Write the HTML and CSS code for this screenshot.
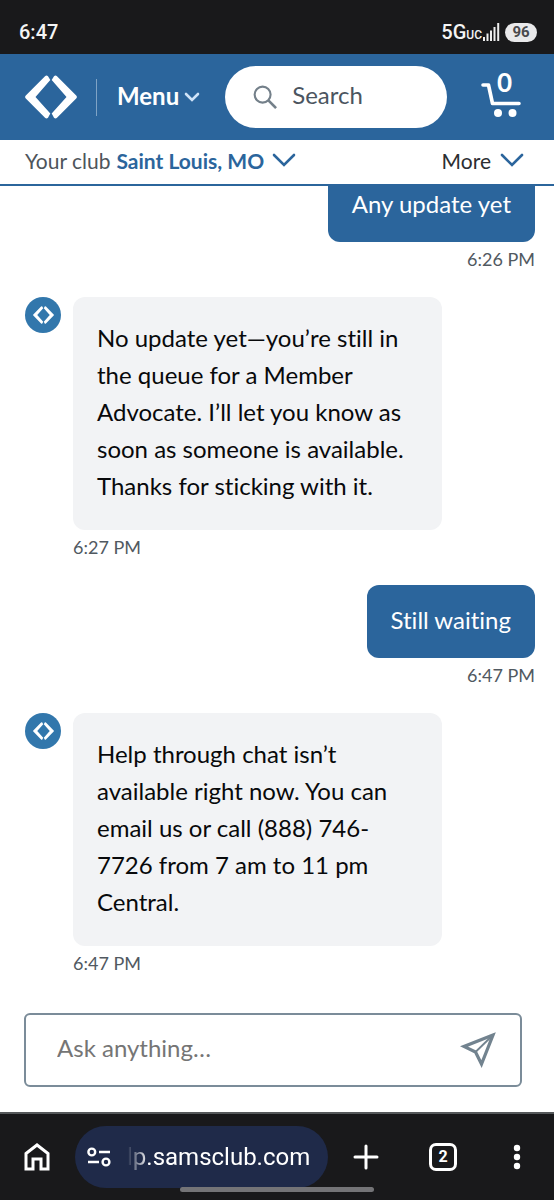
FILE: index.html
```html
<!DOCTYPE html>
<html lang="en">
<head>
<meta charset="utf-8">
<meta name="viewport" content="width=device-width, initial-scale=1">
<title>Chat</title>
<link rel="stylesheet" href="styles.css">
</head>
<body>
<svg width="0" height="0" class="defs" aria-hidden="true">
  <symbol id="mark" viewBox="0 0 52 44">
    <path fill="currentColor" d="M20 1.2Q21.500 0 23 1.200L25.300 5L10.500 22L25.300 38.500L23 42.800Q21.500 44 20 42.800L.8 23.500Q-.6 22 .8 20.500Z"/>
    <path fill="currentColor" d="M32 1.200Q30.500 0 29 1.200L26.700 5L41.500 22L26.700 38.500L29 42.800Q30.500 44 32 42.800L51.200 23.500Q52.600 22 51.200 20.500Z"/>
  </symbol>
  <symbol id="chevron" viewBox="0 0 24 14">
    <path fill="none" stroke="currentColor" stroke-width="2.600" stroke-linecap="round" d="M2 2L12 12L22 2"/>
  </symbol>
</svg>
<div class="screen">
  <div class="status">
    <span class="clock">6:47</span>
    <span class="network">5G<small>UC</small></span>
    <svg class="signal" viewBox="0 0 17 18" aria-hidden="true"><path fill="#eee" d="M0 14h2v4H0zM3.500 10.500h2V18h-2zM7 7.500h2V18H7zM10.500 4h2v14h-2zM14.200 0h2v18h-2z"/></svg>
    <span class="battery">96</span>
  </div>
  <header class="header">
    <a class="logo" href="#" aria-label="Home"><svg viewBox="0 0 52 44"><use href="#mark"/></svg></a>
    <button class="menu" type="button"><span>Menu</span><svg viewBox="0 0 16 10" aria-hidden="true"><path fill="none" stroke="#cfe3f8" stroke-width="2.600" stroke-linecap="round" d="M2 2L8 8L14 2"/></svg></button>
    <label class="search">
      <svg viewBox="0 0 26 26" aria-hidden="true"><circle cx="10" cy="10" r="8.300" fill="none" stroke="#74808a" stroke-width="2.200"/><path d="M16 16L24 24" stroke="#74808a" stroke-width="2.800"/></svg>
      <input type="search" placeholder="Search" aria-label="Search">
    </label>
    <button class="cart" type="button" aria-label="Cart, 0 items">
      <svg viewBox="0 0 40 44" aria-hidden="true"><path fill="none" stroke="#fff" stroke-width="3.600" stroke-linecap="round" stroke-linejoin="round" d="M2 10H7.500L11.500 28.500H38"/><circle cx="17" cy="38" r="4" fill="#fff"/><circle cx="31.500" cy="38" r="4" fill="#fff"/></svg>
      <span class="count">0</span>
    </button>
  </header>
  <nav class="clubbar">
    <button type="button" class="club"><span>Your club</span><b>Saint Louis, MO</b><svg viewBox="0 0 24 14" aria-hidden="true"><use href="#chevron"/></svg></button>
    <button type="button" class="more">More<svg viewBox="0 0 24 14" aria-hidden="true"><use href="#chevron"/></svg></button>
  </nav>
  <main class="chat">
    <article class="message mine"><p class="bubble">Any update yet</p><time>6:26 PM</time></article>
    <article class="message">
      <span class="avatar"><svg viewBox="0 0 52 44" aria-hidden="true"><use href="#mark"/></svg></span>
      <div class="content"><p class="bubble">No update yet—you’re still in the queue for a Member Advocate. I’ll let you know as soon as someone is available. Thanks for sticking with it.</p><time>6:27 PM</time></div>
    </article>
    <article class="message mine"><p class="bubble">Still waiting</p><time>6:47 PM</time></article>
    <article class="message">
      <span class="avatar"><svg viewBox="0 0 52 44" aria-hidden="true"><use href="#mark"/></svg></span>
      <div class="content"><p class="bubble">Help through chat isn’t available right now. You can email us or call (888) 746-7726 from 7 am to 11 pm Central.</p><time>6:47 PM</time></div>
    </article>
  </main>
  <form class="composer">
    <input type="text" placeholder="Ask anything…" aria-label="Ask anything">
    <button type="button" aria-label="Send"><svg viewBox="0 0 36 36" aria-hidden="true"><path fill="none" stroke="#72838f" stroke-width="3.200" d="M33 3L4 14.500L15.500 20L21.500 32Z"/><path d="M15 20.500L33 3" stroke="#72838f" stroke-width="1.800"/></svg></button>
  </form>
  <footer class="browser">
    <button type="button" aria-label="Home page"><svg class="home" viewBox="0 0 26 28" aria-hidden="true"><path fill="none" stroke="#fff" stroke-width="3" d="M2 10.500L13 2L24 10.500V26H17V16H9V26H2Z"/></svg></button>
    <button type="button" class="address">
      <svg viewBox="0 0 24 20" aria-hidden="true"><g fill="none" stroke="#fff" stroke-width="2.400"><circle cx="4.800" cy="5" r="3.400"/><path d="M12 5H23M1 15H12"/><circle cx="19" cy="15" r="3.400"/></g></svg>
      <span>lp.samsclub.com</span>
    </button>
    <button type="button" aria-label="New tab"><svg class="plus" viewBox="0 0 26 26" aria-hidden="true"><path stroke="#fff" stroke-width="3" stroke-linecap="round" d="M13 2V24M2 13H24"/></svg></button>
    <div class="tools">
      <button type="button" aria-label="2 open tabs"><span class="tabs">2</span></button>
      <button type="button" aria-label="More options"><svg class="dots" viewBox="0 0 8 26" aria-hidden="true"><g fill="#fff"><circle cx="4" cy="4" r="3.200"/><circle cx="4" cy="13" r="3.200"/><circle cx="4" cy="22" r="3.200"/></g></svg></button>
    </div>
    <span class="handle"></span>
  </footer>
</div>
</body>
</html>
```
FILE: styles.css
```css
* { box-sizing: border-box; }
body { margin: 0; font-family: Lato, "Open Sans", sans-serif; font-size: 24px; font-variant-ligatures: none; color: #08090b; background: #fff; }
button, input { font: inherit; color: inherit; border: 0; background: none; padding: 0; margin: 0; }
button { display: flex; align-items: center; }
svg { display: block; flex: none; }
p { margin: 0; }
.defs { position: absolute; }
.screen { display: flex; flex-direction: column; height: 100vh; overflow: hidden; }

.status { flex: none; display: flex; align-items: center; height: 54px; padding: 10px 17px 0 19px; background: #19191b; color: #f4f4f4; font-family: Roboto, sans-serif; font-size: 20px; font-weight: 500; }
.clock { flex: 1; }
.network small { font-size: 12px; }
.signal { width: 17px; height: 18px; margin: 0 5px 0 1px; }
.battery { width: 32px; border-radius: 10px; background: #e9e9eb; color: #4a4a4d; font-size: 15px; font-weight: 700; line-height: 19px; text-align: center; }

.header { flex: none; display: flex; align-items: center; height: 86px; padding: 0 33px 0 25px; background: #2b659c; color: #fff; }
.logo { color: #fff; }
.logo svg { width: 52px; height: 44px; }
.menu { gap: 5px; height: 37px; margin-left: 19px; padding-left: 20px; border-left: 1px solid #7fa3c5; font-weight: 700; }
.menu span { padding-bottom: 3px; }
.menu svg { width: 16px; height: 10px; }
.search { flex: 1; min-width: 0; display: flex; align-items: center; gap: 14px; height: 62px; margin: 0 34px 0 25px; padding: 0 24px 0 28px; border-radius: 31px; background: #fff; }
.search svg { width: 25px; height: 25px; }
.search input { width: 100%; min-width: 0; padding-bottom: 5px; outline: 0; appearance: none; color: #4b5560; }
.search input::placeholder { color: #4b5560; opacity: 1; }
.cart { position: relative; width: 40px; height: 44px; }
.cart svg { width: 40px; height: 44px; }
.count { position: absolute; left: 16px; top: -7px; font-size: 26px; line-height: 28px; font-weight: 700; }

.clubbar { flex: none; display: flex; justify-content: space-between; height: 46px; padding: 0 30px 4px 25px; border-bottom: 2px solid #2b659c; font-size: 21px; }
.club { gap: 6px; color: #4e555b; }
.club b { color: #2b659c; }
.more { gap: 9px; color: #2c2e32; }
.clubbar svg { width: 24px; height: 14px; color: #2b659c; }
.club svg { margin-left: 2px; }

.chat { flex: 1; min-height: 0; display: flex; flex-direction: column; justify-content: flex-end; gap: 25px; padding: 0 19px 37px 25px; overflow: hidden; }
.message { flex: none; display: flex; gap: 12px; }
.mine { flex-direction: column; align-items: flex-end; gap: 0; }
.avatar { flex: none; display: grid; place-items: center; width: 36px; height: 36px; border-radius: 50%; background: #3277ac; color: #fff; }
.avatar svg { width: 21px; height: 18px; }
.content { max-width: 369px; }
.bubble { padding: 22px 24px 26px; border-radius: 12px; background: #f2f3f5; line-height: 37px; }
.mine .bubble { padding: 16px 24px 20px; background: #2b659c; color: #fff; }
.message time { display: block; padding-top: 4px; font-size: 18px; line-height: 26px; color: #515961; }

.composer { flex: none; display: flex; align-items: center; height: 74px; margin: 0 32px 25px 24px; padding: 0 24px 0 31px; border: 2px solid #7b8c99; border-radius: 6px; }
.composer input { flex: 1; min-width: 0; padding-bottom: 5px; outline: 0; }
.composer input::placeholder { color: #757575; opacity: 1; }
.composer svg { width: 36px; height: 36px; }

.browser { flex: none; position: relative; display: flex; align-items: center; gap: 25px; height: 88px; padding: 0 33px 0 24px; border-top: 2px solid #55585a; background: #19191b; color: #fff; font-family: Roboto, sans-serif; }
.home { width: 26px; height: 28px; }
.address { flex: 1; gap: 16px; height: 62px; min-width: 0; padding: 0 12px; border-radius: 31px; background: #1f2a49; }
.address svg { width: 24px; height: 20px; }
.address span { -webkit-mask-image: linear-gradient(90deg, transparent, #000 22px); mask-image: linear-gradient(90deg, transparent, #000 22px); }
.plus { width: 26px; height: 26px; }
.tools { display: flex; gap: 56px; padding-left: 25px; }
.tabs { display: grid; place-items: center; width: 28px; height: 28px; border: 3px solid #fff; border-radius: 7px; font-size: 16px; font-weight: 700; line-height: 20px; }
.dots { width: 8px; height: 26px; }
.handle { position: absolute; left: 50%; bottom: 8px; width: 194px; height: 5px; margin-left: -97px; border-radius: 3px; background: #747477; }
```
